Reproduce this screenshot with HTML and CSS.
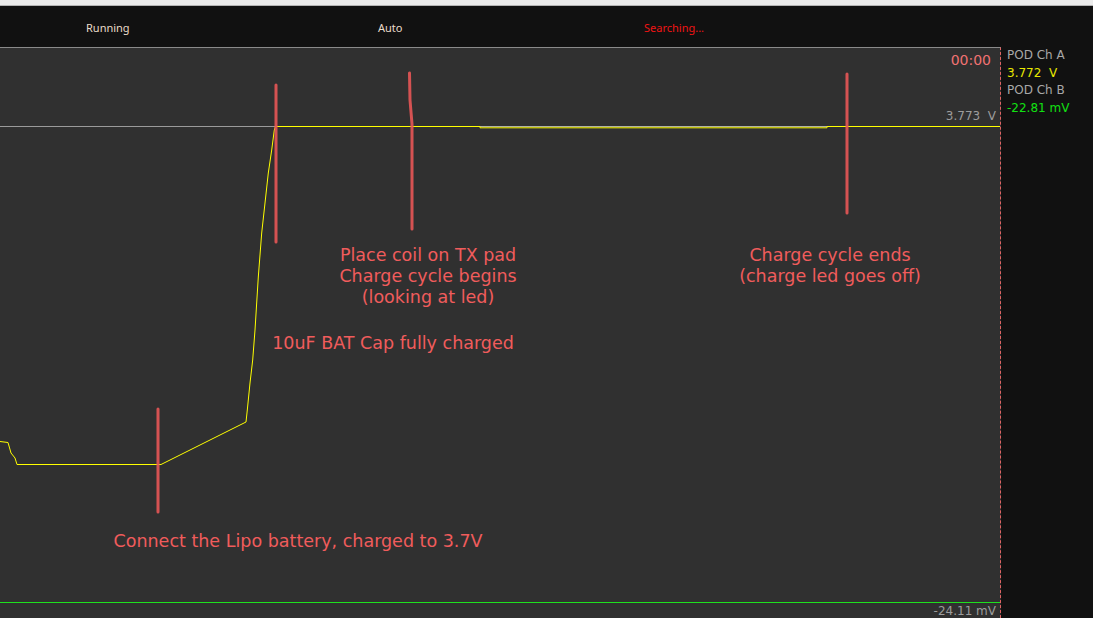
FILE: index.html
```html
<!DOCTYPE html>
<html>
<head>
  <title>Scope</title>
  <link rel="stylesheet" href="styles.css">
</head>
<body>
  <div class="titlebar"></div>

  <div class="toolbar">
    <span class="state run">Running</span>
    <span class="state trig">Auto</span>
    <span class="state search">Searching...</span>
  </div>

  <div class="main">
    <div class="plot">
      <svg class="trace" width="1000" height="570" viewBox="0 48 1000 570">
        <!-- reference level -->
        <line x1="0" y1="126.5" x2="276" y2="126.5" stroke="#9a9a9a" stroke-width="1"/>
        <line x1="480" y1="126.5" x2="827" y2="126.5" stroke="#b4b4a0" stroke-width="1"/>
        <!-- channel B -->
        <line x1="0" y1="602.5" x2="1000" y2="602.5" stroke="#1ee01e" stroke-width="1.2"/>
        <!-- channel A -->
        <polyline fill="none" stroke="#ffff00" stroke-width="1"
          points="0,441.5 8,442.5 9,446 11,453 15,458 17,464.5 161,464.5 246,422 247.3,410 250,383 252.7,360 255,330 258.3,277 261.7,233 265,203 268.3,173 271.7,150 274.3,130 275.5,126.5 480,126.5 480,127.8 827,127.8 827,126.5 1000,126.5"/>
        <!-- marks -->
        <g class="mark">
          <path d="M276 85 V242"/>
          <path d="M409.5 73 L410 100 L412 124 L412 229"/>
          <path d="M847 74 V213"/>
          <path d="M158 409 V512"/>
        </g>
      </svg>

      <div class="clock">00:00</div>
      <div class="level top">3.773  V</div>
      <div class="level bottom">-24.11 mV</div>

      <div class="note coil">Place coil on TX pad<br>Charge cycle begins<br>(looking at led)</div>
      <div class="note cap">10uF BAT Cap fully charged</div>
      <div class="note ends">Charge cycle ends<br>(charge led goes off)</div>
      <div class="note lipo">Connect the Lipo battery, charged to 3.7V</div>
    </div>

    <div class="side">
      <div class="name">POD Ch A</div>
      <div class="val a">3.772  V</div>
      <div class="name">POD Ch B</div>
      <div class="val b">-22.81 mV</div>
    </div>
  </div>
</body>
</html>
```

FILE: styles.css
```css
html, body {
  margin: 0;
  padding: 0;
  height: 100%;
  overflow: hidden;
}

body {
  background-color: #111111;
  font-family: "DejaVu Sans", sans-serif;
  width: 1093px;
  height: 618px;
}

.titlebar {
  height: 5px;
  background-color: #ebebeb;
  border-bottom: 1px solid #b4b4b4;
}

.toolbar {
  height: 41px;
  display: flex;
  align-items: center;
  padding-left: 86px;
  padding-top: 2px;
  box-sizing: border-box;
  font-family: "Noto Sans", sans-serif;
  font-size: 11px;
}

.state {
  color: #eadccb;
}

.run {
  width: 292px;
}

.trig {
  width: 266px;
}

.search {
  color: #f01414;
}

.main {
  display: flex;
  height: 571px;
}

.plot {
  position: relative;
  width: 1000px;
  height: 570px;
  background-color: #303030;
  border-top: 1px solid #8a8a8a;
  border-right: 1px dashed #e06464;
  overflow: hidden;
}

.trace {
  position: absolute;
  left: 0;
  top: 0;
}

.mark path {
  fill: none;
  stroke: #e85656;
  stroke-opacity: 0.9;
  stroke-width: 3;
  stroke-linecap: round;
  stroke-linejoin: round;
}

.clock {
  position: absolute;
  right: 9px;
  top: 5px;
  font-size: 14px;
  line-height: 14px;
  color: #f07272;
}

.level {
  position: absolute;
  right: 4px;
  font-size: 12px;
  line-height: 12px;
  color: #9c9c9c;
  white-space: pre;
}

.level.top {
  top: 62px;
}

.level.bottom {
  top: 557px;
}

.note {
  position: absolute;
  width: 400px;
  font-size: 17.5px;
  line-height: 21px;
  color: #f05c5c;
  text-align: center;
}

.coil {
  left: 228px;
  top: 197px;
}

.cap {
  left: 193px;
  top: 285px;
}

.ends {
  left: 630px;
  top: 197px;
}

.lipo {
  left: 98px;
  top: 483px;
}

.side {
  flex: 1;
  padding-left: 6px;
  font-size: 12px;
  line-height: 17.7px;
}

.name {
  color: #a8a8a8;
}

.val {
  white-space: pre;
}

.val.a {
  color: #e8e800;
}

.val.b {
  color: #12e012;
}
```
